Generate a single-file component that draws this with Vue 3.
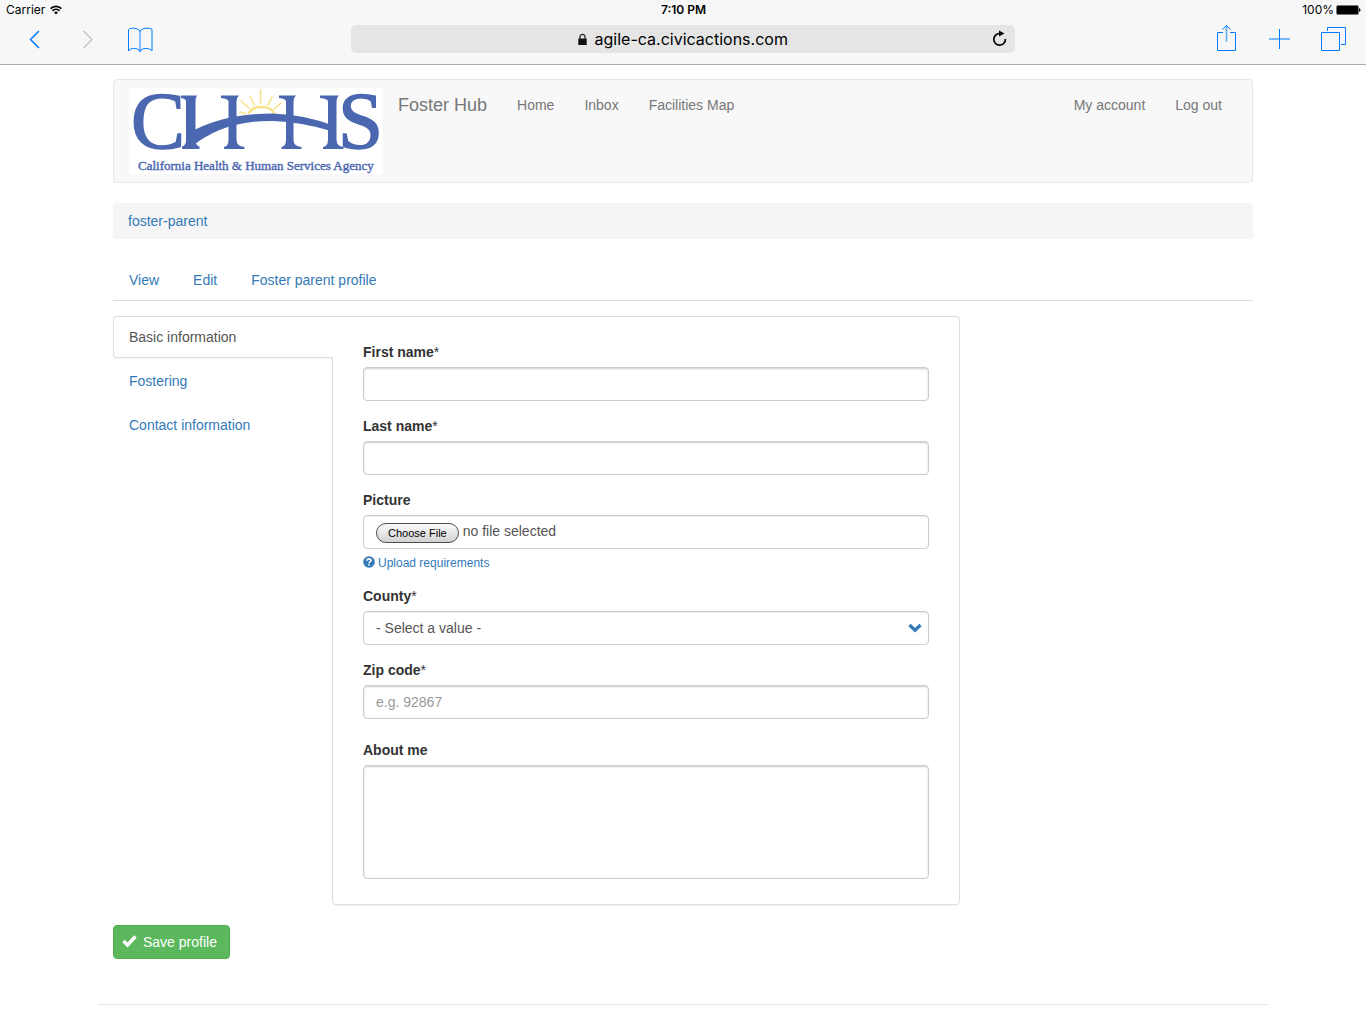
<script setup>
import { ref } from 'vue'

const url = ref('agile-ca.civicactions.com')
const active = ref('Basic information')
const sections = ['Basic information', 'Fostering', 'Contact information']
const mainLinks = ['Home', 'Inbox', 'Facilities Map']
const userLinks = ['My account', 'Log out']
const tabs = ['View', 'Edit', 'Foster parent profile']
const county = ref('')
const picker = ref(null)
const fileName = ref('no file selected')

function onPick(event) {
  const file = event.target.files[0]
  fileName.value = file ? file.name : 'no file selected'
}
</script>

<template>
  <div class="screen">
    <header class="browser">
      <div class="status">
        <div class="status-side">
          <span>Carrier</span>
          <svg width="12" height="10" viewBox="0 0 12 10" fill="none" stroke="#000" stroke-width="1.7">
            <path d="M.6 3.6a7.6 7.6 0 0 1 10.8 0M2.500 5.800a5 5 0 0 1 7 0" />
            <path d="M6 9.400 4 7.400a2.800 2.800 0 0 1 4 0z" fill="#000" stroke="none" />
          </svg>
        </div>
        <strong class="clock">7:10 PM</strong>
        <div class="status-side status-right">
          <span>100%</span>
          <svg width="25" height="10" viewBox="0 0 25 10">
            <rect x=".5" y=".5" width="22" height="9" rx="1.5" fill="#000" stroke="#777" />
            <path d="M23 3.200c2 .3 2 3.300 0 3.600z" fill="#000" />
          </svg>
        </div>
      </div>
      <div class="toolbar">
        <div class="tools">
          <button type="button" class="tool" aria-label="Back">
            <svg width="26" height="28" viewBox="0 0 26 28" fill="none" stroke="#007aff" stroke-width="1.5"><path d="M18 6 9.500 14.500l8.500 8.500" /></svg>
          </button>
          <button type="button" class="tool" aria-label="Forward">
            <svg width="26" height="28" viewBox="0 0 26 28" fill="none" stroke="#c4c4c4" stroke-width="1.5"><path d="m9.500 6 8.500 8.500L9.500 23" /></svg>
          </button>
          <button type="button" class="tool" aria-label="Bookmarks">
            <svg width="26" height="28" viewBox="0 0 26 28" fill="none" stroke="#007aff" stroke-width="1">
              <path d="M13 6.500C11.500 2.500 3 2.500 1.500 4.500v21.500c1.500-3.500 10-3.500 11.500.5 1.500-4 10-4 12-.5V4.500C23.500 2.500 14.500 2.500 13 6.500z" />
              <path d="M13 6v21" stroke-width="1.600" opacity=".6" />
            </svg>
          </button>
        </div>
        <div class="address">
          <svg class="lock" width="9" height="13" viewBox="0 0 9 13">
            <path d="M2 6V3.500C2 .700 7 .700 7 3.500V6" fill="none" stroke="#222" stroke-width="1.200" />
            <rect x=".3" y="5.500" width="8.400" height="6.500" rx=".6" fill="#111" />
          </svg>
          <input v-model="url" class="url" type="text" aria-label="Address">
          <button type="button" class="reload" aria-label="Reload">
            <svg width="15" height="17" viewBox="0 0 15 17">
              <path d="M7.500 3.500A5.800 5.800 0 1 0 13.400 9" fill="none" stroke="#000" stroke-width="1.700" />
              <path d="m7 .5 5.500 3-5.500 3z" />
            </svg>
          </button>
        </div>
        <div class="tools tools-right">
          <button type="button" class="tool" aria-label="Share">
            <svg width="26" height="28" viewBox="0 0 26 28" fill="none" stroke="#007aff">
              <path d="M10 7.500H4.500v18h18v-18H17" /><path d="M13.500 1v15.500" stroke-width="1.800" opacity=".55" /><path d="m9.500 4.500 4-4 4 4" />
            </svg>
          </button>
          <button type="button" class="tool" aria-label="New tab">
            <svg width="26" height="28" viewBox="0 0 26 28" fill="none" stroke="#007aff"><path d="M13.500 4v20" /><path d="M3 14h21" stroke-width="2" opacity=".5" /></svg>
          </button>
          <button type="button" class="tool" aria-label="Show tabs">
            <svg width="26" height="28" viewBox="0 0 26 28" fill="none" stroke="#007aff">
              <path d="M2.500 7.500h18v18h-18zM8.500 6V2.500h18v17H22" />
            </svg>
          </button>
        </div>
      </div>
    </header>

    <div class="container">
      <nav class="navbar">
        <a href="#" class="logo" aria-label="California Health and Human Services Agency">
          <svg width="254" height="86" viewBox="0 0 254 86">
            <rect width="254" height="86" fill="#fff" />
            <g fill="none" stroke="#f7e28b" stroke-width="1.600" stroke-linecap="round">
              <path d="M120 25c4-8 21-8 25 0" stroke-width="2.500" />
              <path d="m112 13 8 7M121 8l4 9M131.500 2v13M143 9l-4 8M152 15l-7 6M117 26l-6-2" />
            </g>
            <g fill="#4a67b0" stroke="#4a67b0" font-family="'Liberation Serif', serif">
              <text x="2" y="60" font-size="81" stroke-width="1.500">C</text>
              <text x="209" y="60" font-size="81" stroke-width="1.500">S</text>
              <g stroke="none">
                <path d="M52 7.500h16q-1.500 2-1.500 6v39q0 5 4 6v2.500H53v-2.500q4-1 4-6v-39q0-3-5-3.500z" />
                <path d="M92 7.500h18q-2.500 2-2.500 6v38q0 7 8 7.500v2H95v-2q4.500-.5 4.500-7.500v-38q0-3-7.500-3.500z" />
                <path d="M150 7.500h17q-2.500 2-2.500 6v38q0 7 8 7.500v2h-20v-2q4.500-.5 4.500-7.500v-38q0-3-7-3.500z" />
                <path d="M191 7.500h19q-2.500 2-2.500 6v38q0 7 7 7.500v2h-20.500v-2q5-.5 5-7.500v-38q0-3-8-3.500z" />
                <path d="M60 45Q94 25.500 144 25.500q31 1 60 12v6q-31-9.500-60-10.500Q94 32 61 60z" />
              </g>
              <text x="9" y="82" font-size="13" stroke-width=".4">California Health &amp; Human Services Agency</text>
            </g>
          </svg>
        </a>
        <a href="#" class="brand">Foster Hub</a>
        <ul class="nav">
          <li v-for="link in mainLinks" :key="link"><a href="#">{{ link }}</a></li>
        </ul>
        <ul class="nav nav-right">
          <li v-for="link in userLinks" :key="link"><a href="#">{{ link }}</a></li>
        </ul>
      </nav>

      <div class="breadcrumb"><a href="#">foster-parent</a></div>

      <ul class="tabs">
        <li v-for="tab in tabs" :key="tab"><a href="#">{{ tab }}</a></li>
      </ul>

      <form @submit.prevent>
        <div class="row">
          <div class="vertical-tabs">
            <ul class="sections">
              <li v-for="name in sections" :key="name" :class="{ active: name === active }">
                <a href="#" @click.prevent="active = name">{{ name }}</a>
              </li>
            </ul>
            <div class="panel">
              <div class="group">
                <label for="first">First name<span class="req">*</span></label>
                <input id="first" class="control" type="text">
              </div>
              <div class="group">
                <label for="last">Last name<span class="req">*</span></label>
                <input id="last" class="control" type="text">
              </div>
              <div class="group">
                <label for="picture">Picture</label>
                <div class="control file">
                  <button type="button" class="choose" @click="picker.click()">Choose File</button>
                  <span>{{ fileName }}</span>
                  <input id="picture" ref="picker" type="file" hidden @change="onPick">
                </div>
                <a href="#" class="help">
                  <svg width="12" height="12" viewBox="0 0 12 12">
                    <circle cx="6" cy="6" r="5.800" fill="#337ab7" />
                    <path d="M4 4.800C4 2.300 8 2.300 8 4.600c0 1.300-2 1.300-2 2.600" fill="none" stroke="#fff" stroke-width="1.600" />
                    <rect x="5.200" y="8" width="1.600" height="1.500" fill="#fff" />
                  </svg>
                  <span>Upload requirements</span>
                </a>
              </div>
              <div class="group">
                <label for="county">County<span class="req">*</span></label>
                <div class="select">
                  <select id="county" v-model="county" class="control">
                    <option value="">- Select a value -</option>
                    <option>Orange</option>
                    <option>Sacramento</option>
                  </select>
                  <svg class="chevron" width="14" height="10" viewBox="0 0 14 10"><path d="m1.500 2 5.500 5.200L12.500 2" fill="none" stroke="#337ab7" stroke-width="3.200" /></svg>
                </div>
              </div>
              <div class="group">
                <label for="zip">Zip code<span class="req">*</span></label>
                <input id="zip" class="control" type="text" placeholder="e.g. 92867">
              </div>
              <div class="group about">
                <label for="about">About me</label>
                <textarea id="about" class="control" rows="5"></textarea>
              </div>
            </div>
          </div>
        </div>
        <button type="submit" class="save">
          <svg width="15" height="14" viewBox="0 0 15 14"><path d="m1.500 6 4 4L13.500 1.500" fill="none" stroke="#fff" stroke-width="3.400" /></svg>
          <span>Save profile</span>
        </button>
      </form>
    </div>
    <hr class="rule">
  </div>
</template>

<style>
body {
  margin: 0;
  background: #fff;
}
</style>

<style scoped>
* {
  box-sizing: border-box;
}
.screen {
  font: 14px/20px "Liberation Sans", Arial, sans-serif;
  color: #333;
}
a {
  color: #337ab7;
  text-decoration: none;
}
ul {
  list-style: none;
  margin: 0;
  padding: 0;
}
button {
  font: inherit;
  cursor: pointer;
}
svg {
  display: block;
  flex: none;
  overflow: visible;
}
.browser {
  background: #f7f7f7;
  border-bottom: 1px solid #acacac;
  color: #000;
  font-family: Inter, Roboto, sans-serif;
}
.status {
  display: flex;
  align-items: center;
  height: 20px;
  padding: 0 5px 0 6px;
  font-size: 12px;
}
.status-side {
  display: flex;
  flex: 1;
  align-items: center;
  gap: 5px;
}
.status-right {
  justify-content: flex-end;
  gap: 2px;
}
.clock {
  font-weight: 600;
}
.toolbar {
  display: flex;
  align-items: center;
  justify-content: space-between;
  height: 44px;
  padding: 0 21px 6px;
}
.tools {
  display: flex;
  flex: 1;
  gap: 27px;
}
.tools-right {
  justify-content: flex-end;
}
.tool,
.reload {
  border: 0;
  background: none;
  padding: 0;
}
.address {
  position: relative;
  display: flex;
  flex: 0 1 664px;
  align-items: center;
  justify-content: center;
  gap: 8px;
  height: 28px;
  border-radius: 5px;
  background: #e5e5e5;
}
.url {
  width: 194px;
  padding: 0;
  border: 0;
  background: none;
  color: #000;
  font: 16px/24px Inter, Roboto, sans-serif;
}
.reload {
  position: absolute;
  right: 8px;
  top: 5px;
}
.container {
  max-width: 1170px;
  margin: 0 auto;
  padding: 14px 15px 0;
}
.navbar {
  display: flex;
  min-height: 104px;
  padding: 0 15px;
  margin-bottom: 20px;
  border: 1px solid #e7e7e7;
  border-radius: 4px;
  background: #f8f8f8;
}
.navbar a {
  color: #777;
}
.logo {
  margin: 8px 15px 0 0;
}
.brand {
  padding: 15px 15px 0 0;
  font-size: 18px;
}
.nav {
  display: flex;
}
.nav a {
  display: block;
  padding: 15px;
}
.nav-right {
  margin-left: auto;
}
.breadcrumb {
  padding: 8px 15px;
  border-radius: 4px;
  background: #f5f5f5;
}
.tabs {
  display: flex;
  gap: 2px;
  margin: 20px 0 15px;
  border-bottom: 1px solid #ddd;
}
.tabs a {
  display: block;
  padding: 11px 16px 10px;
}
.row {
  margin: 0 -14px 0 -15px;
}
.vertical-tabs {
  display: flex;
  width: 75%;
  padding: 0 15px;
}
.sections {
  position: relative;
  z-index: 1;
  display: flex;
  flex: 0 0 220px;
  flex-direction: column;
  gap: 2px;
  margin-right: -1px;
}
.sections a {
  display: block;
  padding: 10px 15px;
  border: 1px solid transparent;
}
.sections .active a {
  border-color: #ddd;
  border-right: 0;
  border-radius: 4px 0 0 4px;
  background: #fff;
  box-shadow: 0 1px 1px rgba(0, 0, 0, 0.05);
  color: #555;
}
.panel {
  flex: 1;
  min-width: 0;
  padding: 25px 30px;
  border: 1px solid #ddd;
  border-radius: 0 4px 4px 4px;
  box-shadow: 0 1px 1px rgba(0, 0, 0, 0.05);
}
.group {
  margin-bottom: 15px;
}
label {
  display: block;
  margin-bottom: 5px;
  font-weight: 700;
}
.req {
  font-weight: 400;
}
.control {
  display: block;
  width: 100%;
  height: 34px;
  margin: 0;
  padding: 6px 12px;
  border: 1px solid #ccc;
  border-radius: 4px;
  background: #fff;
  box-shadow: inset 0 1px 1px rgba(0, 0, 0, 0.08);
  color: #555;
  font: inherit;
  appearance: none;
}
input.control,
textarea.control {
  box-shadow: inset 0 1px 2px rgba(0, 0, 0, 0.2);
}
.control::placeholder {
  color: #999;
}
.file {
  display: flex;
  align-items: center;
  gap: 4px;
  padding: 0 12px 2px;
}
.choose {
  height: 20px;
  margin-top: 4px;
  padding: 0 11px;
  border: 1px solid #4c4c4c;
  border-radius: 10px;
  background: linear-gradient(#fafafa, #d2d2d2);
  color: #000;
  font-size: 11px;
  line-height: 18px;
}
.help {
  display: flex;
  align-items: flex-start;
  gap: 3px;
  padding-top: 7px;
  font-size: 12px;
  line-height: 15px;
}
.select {
  position: relative;
}
.chevron {
  position: absolute;
  top: 12px;
  right: 7px;
  pointer-events: none;
}
.about {
  margin: 21px 0 0;
}
textarea.control {
  height: 114px;
  resize: none;
}
.save {
  display: flex;
  align-items: center;
  gap: 6px;
  height: 34px;
  margin-top: 20px;
  padding: 0 12px 0 8px;
  border: 1px solid #4cae4c;
  border-radius: 4px;
  background: #5cb85c;
  color: #fff;
}
.rule {
  max-width: 1170px;
  margin: 45px auto 19px;
  border: 0;
  border-top: 1px solid #e5e5e5;
}
</style>
